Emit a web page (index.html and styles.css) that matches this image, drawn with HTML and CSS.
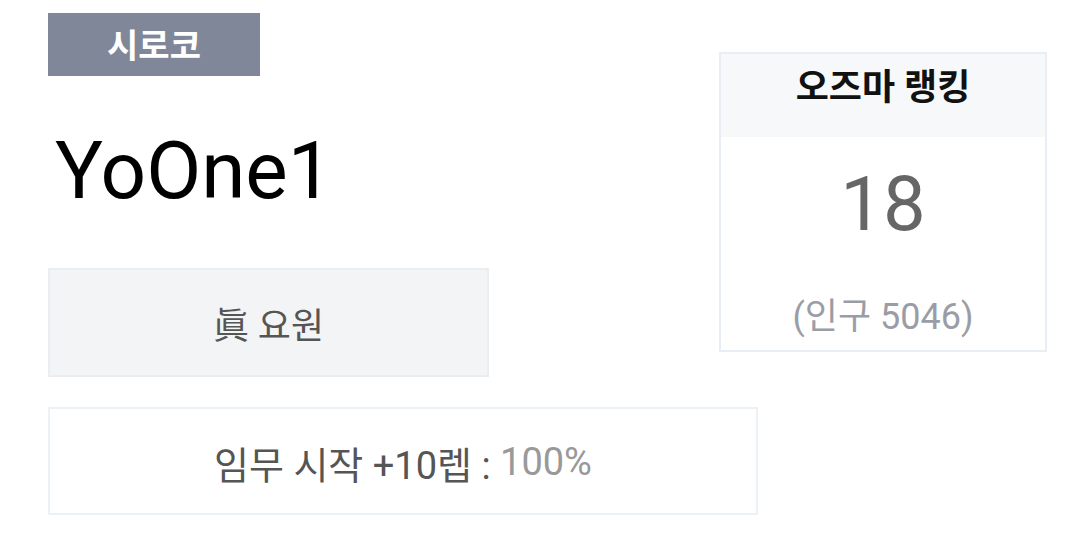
FILE: index.html
```html
<!DOCTYPE html>
<html lang="ko">
<head>
<meta charset="utf-8">
<title>YoOne1</title>
<link rel="stylesheet" href="styles.css">
</head>
<body>
<div class="page">
  <div class="top-row">
    <div class="left-col">
      <div class="badge">시로코</div>
      <div class="name">YoOne1</div>
      <div class="rank-box">眞 요원</div>
    </div>
    <div class="card">
      <div class="card-head">오즈마 랭킹</div>
      <div class="card-body">
        <div class="card-num">18</div>
        <div class="card-sub">(인구 5046)</div>
      </div>
    </div>
  </div>
  <div class="mission">임무 시작 +10렙 : <span class="pct">100%</span></div>
</div>
</body>
</html>
```

FILE: styles.css
```css
* { box-sizing: border-box; }
html, body { margin: 0; padding: 0; background: #fff; }
body {
  font-family: Roboto, "Noto Sans CJK KR", sans-serif;
  color: #555;
}
.page {
  padding: 13px 0 0 48px;
  width: 1047px;
}
.top-row {
  display: flex;
  justify-content: space-between;
  align-items: flex-start;
}
.left-col {
  width: 441px;
  display: flex;
  flex-direction: column;
  align-items: flex-start;
}
.badge {
  width: 212px;
  height: 63px;
  padding-top: 4px;
  background: #7f8799;
  color: #fff;
  font-weight: 700;
  font-size: 34px;
  line-height: 59px;
  text-align: center;
}
.name {
  margin-top: 47px;
  margin-left: 7px;
  font-size: 80px;
  line-height: 96px;
  color: #000;
}
.rank-box {
  margin-top: 49px;
  width: 441px;
  height: 109px;
  background: #f3f4f5;
  border: 2px solid #e9eef3;
  font-size: 36px;
  color: #555;
  display: flex;
  align-items: center;
  justify-content: center;
}
.card {
  margin-top: 39px;
  width: 328px;
  height: 300px;
  border: 2px solid #e9eef4;
  display: flex;
  flex-direction: column;
}
.card-head {
  height: 83px;
  background: #f6f8fa;
  color: #111;
  font-weight: 700;
  font-size: 36px;
  line-height: 40px;
  padding-top: 14px;
  text-align: center;
}
.card-body {
  flex: 1;
  display: flex;
  flex-direction: column;
  align-items: center;
  padding-top: 29px;
}
.card-num {
  font-size: 76px;
  line-height: 76px;
  color: #666;
}
.card-sub {
  margin-top: 55px;
  font-size: 36px;
  line-height: 40px;
  color: #9a9da6;
}
.mission {
  margin-top: 30px;
  width: 710px;
  height: 108px;
  padding-top: 2px;
  border: 2px solid #ecf1f5;
  font-size: 38px;
  color: #555;
  display: flex;
  align-items: center;
  justify-content: center;
  white-space: pre;
}
.pct { color: #999; }
```
